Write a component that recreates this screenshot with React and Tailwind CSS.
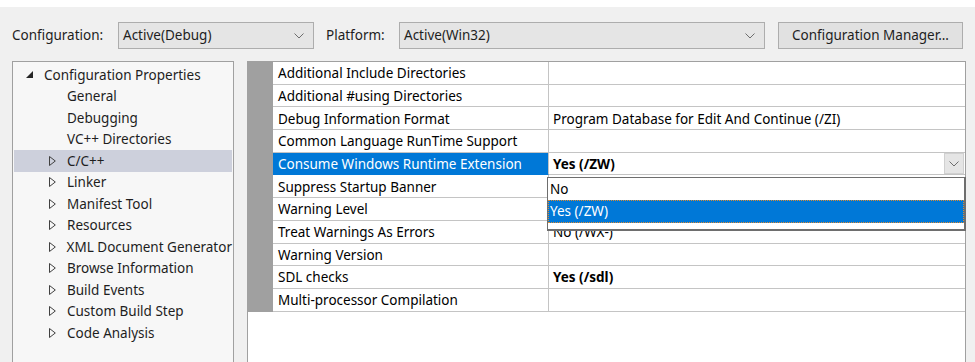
import React from "react";

const font = { fontFamily: '"Noto Sans", "Open Sans", sans-serif' };

function Chevron({ className = "" }) {
  return (
    <svg width="10" height="6" viewBox="0 0 10 6" className={className}>
      <polyline points="0.5,0.5 5,5 9.5,0.5" fill="none" stroke="#6d6d6d" strokeWidth="1" />
    </svg>
  );
}

function Combo({ text, width }) {
  return (
    <div
      className={`flex items-center justify-between h-[27px] ${width} bg-[#e5e5e5] border border-[#adadad] pl-[4px] pr-[9px] text-[#1e1e1e]`}
    >
      <span>{text}</span>
      <Chevron />
    </div>
  );
}

function Expanded() {
  return (
    <svg width="7" height="7" viewBox="0 0 7 7">
      <polygon points="7,0 7,7 0,7" fill="#262626" />
    </svg>
  );
}

function Collapsed() {
  return (
    <svg width="7" height="10" viewBox="0 0 7 10">
      <polygon points="0.5,0.5 6.3,5 0.5,9.5" fill="none" stroke="#404040" strokeWidth="1" />
    </svg>
  );
}

const treeItems = [
  { t: "General", leaf: true },
  { t: "Debugging", leaf: true },
  { t: "VC++ Directories", leaf: true },
  { t: "C/C++", sel: true },
  { t: "Linker" },
  { t: "Manifest Tool" },
  { t: "Resources" },
  { t: "XML Document Generator" },
  { t: "Browse Information" },
  { t: "Build Events" },
  { t: "Custom Build Step" },
  { t: "Code Analysis" },
];

const rows = [
  { n: "Additional Include Directories", v: "" },
  { n: "Additional #using Directories", v: "" },
  { n: "Debug Information Format", v: "Program Database for Edit And Continue (/ZI)" },
  { n: "Common Language RunTime Support", v: "" },
  { n: "Consume Windows Runtime Extension", v: "Yes (/ZW)", bold: true, sel: true },
  { n: "Suppress Startup Banner", v: "" },
  { n: "Warning Level", v: "" },
  { n: "Treat Warnings As Errors", v: "No (/WX-)" },
  { n: "Warning Version", v: "" },
  { n: "SDL checks", v: "Yes (/sdl)", bold: true },
  { n: "Multi-processor Compilation", v: "" },
];

export default function App() {
  return (
    <div style={font} className="w-[975px] h-[362px] bg-[#f0f0f0] overflow-hidden text-[13.5px] text-[#1e1e1e]">
      <div className="h-[7px] bg-white" />
      <div className="flex items-center pt-[15px] pl-[12px]">
        <span className="w-[106px]">Configuration:</span>
        <Combo text="Active(Debug)" width="w-[196px]" />
        <span className="ml-[12px] w-[73px]">Platform:</span>
        <Combo text="Active(Win32)" width="w-[366px]" />
        <div className="ml-[13px] h-[27px] w-[185px] flex items-center justify-center bg-[#e1e1e1] border border-[#adadad]">
          Configuration Manager...
        </div>
      </div>
      <div className="flex mt-[12px] h-[310px]">
        <div className="ml-[12px] w-[222px] border border-[#a0a0a0] bg-[#f7f7f7] pt-[2px] pl-[1px] pr-[1px]">
          <div className="flex items-center h-[21.5px] pl-[12px]">
            <span className="w-[18px] flex items-center">
              <Expanded />
            </span>
            <span>Configuration Properties</span>
          </div>
          {treeItems.map((it) => (
            <div
              key={it.t}
              className={`flex items-center h-[21.5px] pl-[35px] whitespace-nowrap ${it.sel ? "bg-[#cdd0dc]" : ""}`}
            >
              <span className="w-[18px] flex items-center">{it.leaf ? null : <Collapsed />}</span>
              <span>{it.t}</span>
            </div>
          ))}
        </div>
        <div className="relative ml-[13px] w-[719px] border border-[#a0a0a0] bg-white">
          {rows.map((r) => (
            <div key={r.n} className="flex h-[22.7px]">
              <div className="w-[25px] bg-[#a0a0a0]" />
              <div
                className={`w-[276px] flex items-center pl-[5px] pt-[1px] border-b border-r border-[#c4c4c4] whitespace-nowrap ${
                  r.sel ? "bg-[#0078d7] text-white border-b-[#0078d7]" : "text-black"
                }`}
              >
                {r.n}
              </div>
              <div
                className={`flex-1 flex items-center pl-[4px] pt-[1px] border-b border-[#c4c4c4] whitespace-nowrap text-black ${
                  r.bold ? "font-bold" : ""
                }`}
              >
                <span className="flex-1">{r.v}</span>
                {r.sel && (
                  <div className="w-[20px] h-[21px] mr-[1px] -mt-[1px] bg-[#e5e5e5] border border-[#d0d0d0] flex items-center justify-center">
                    <Chevron />
                  </div>
                )}
              </div>
            </div>
          ))}
          <div className="absolute left-[299px] top-[115px] w-[419px] h-[54px] bg-white border border-[#6e6e6e] border-r-2 border-b-2 pb-[6px]">
            <div className="h-[22px] flex items-center pl-[2px] text-black">No</div>
            <div className="h-[23px] flex items-center pl-[2px] bg-[#0078d7] text-white outline-1 outline-dotted outline-[#e08b2f] -outline-offset-1">
              Yes (/ZW)
            </div>
          </div>
        </div>
      </div>
    </div>
  );
}
